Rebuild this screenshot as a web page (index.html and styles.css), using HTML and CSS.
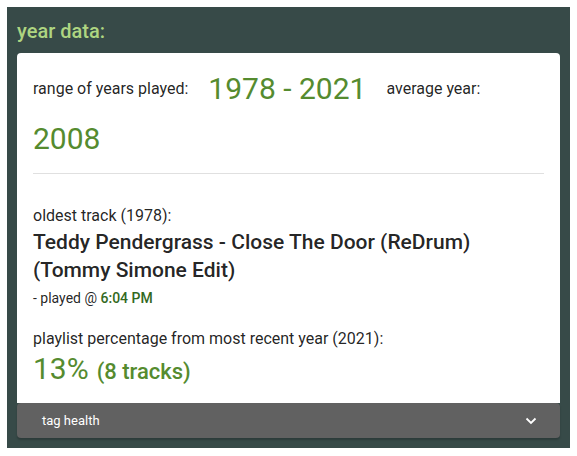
FILE: index.html
```html
<!DOCTYPE html>
<html>
<head>
<meta charset="utf-8">
<link rel="stylesheet" href="styles.css">
</head>
<body>
<section class="panel">
  <h2 class="panel-title">year data:</h2>
  <div class="card">
    <div class="range-row">
      <span class="label">range of years played:</span>
      <span class="big">1978 - 2021</span>
      <span class="label">average year:</span>
      <span class="big">2008</span>
    </div>
    <hr class="divider">
    <div class="oldest">
      <div class="sub">oldest track (1978):</div>
      <div class="track">Teddy Pendergrass - Close The Door (ReDrum) (Tommy Simone Edit)</div>
      <div class="played">- played @ <b>6:04 PM</b></div>
    </div>
    <div class="recent">
      <div class="sub">playlist percentage from most recent year (2021):</div>
      <div class="pct"><span class="big">13%</span> <span class="count">(8 tracks)</span></div>
    </div>
  </div>
  <div class="expander">
    <span>tag health</span>
    <svg class="chev" width="12" height="8" viewBox="0 0 12 8"><path d="M1.5 1.5 L6 6 L10.5 1.5" fill="none" stroke="#fff" stroke-width="1.8"/></svg>
  </div>
</section>
</body>
</html>
```
FILE: styles.css
```css
* { box-sizing: border-box; }
html, body { margin: 0; padding: 0; background: #fff; }
body { padding: 7px; font-family: Roboto, "Noto Sans", sans-serif; color: rgba(0,0,0,.87); }
.panel {
  width: 563px;
  height: 441px;
  background: #374a48;
  padding: 0 10px 10px;
  display: flex;
  flex-direction: column;
}
.panel-title {
  margin: 0;
  font-size: 20px;
  font-weight: 500;
  color: #aed581;
  height: 46px;
  line-height: 48px;
}
.card {
  background: #fff;
  border-radius: 4px 4px 0 0;
  padding: 16px 16px 0;
  flex: 1;
}
.range-row {
  display: flex;
  flex-wrap: wrap;
  align-items: center;
  column-gap: 20px;
}
.range-row > span { height: 40px; line-height: 40px; margin-bottom: 10px; }
.label { font-size: 16px; }
.big { font-size: 30px; color: #558b2f; }
.divider {
  border: 0;
  border-top: 1px solid #e0e0e0;
  margin: 4px 0 0;
}
.oldest { padding-top: 32px; }
.sub { font-size: 16px; line-height: 20px; }
.track { font-size: 21px; font-weight: 500; line-height: 28px; margin-top: 2px; }
.played { font-size: 14px; line-height: 20px; margin-top: 4px; }
.played b { color: #33691e; font-weight: 500; }
.recent { padding-top: 21px; }
.pct { color: #558b2f; line-height: 36px; margin-top: 2px; }
.pct .big { font-size: 30px; }
.count { font-size: 22px; font-weight: 500; margin-left: 4px; }
.expander {
  height: 35px;
  background: #616161;
  border-radius: 4px;
  display: flex;
  align-items: center;
  justify-content: space-between;
  padding: 0 23px 0 25px;
  color: #fff;
  font-size: 13px;
  box-shadow: 0 2px 2px rgba(0,0,0,.2);
}
.chev { display: block; }
```
